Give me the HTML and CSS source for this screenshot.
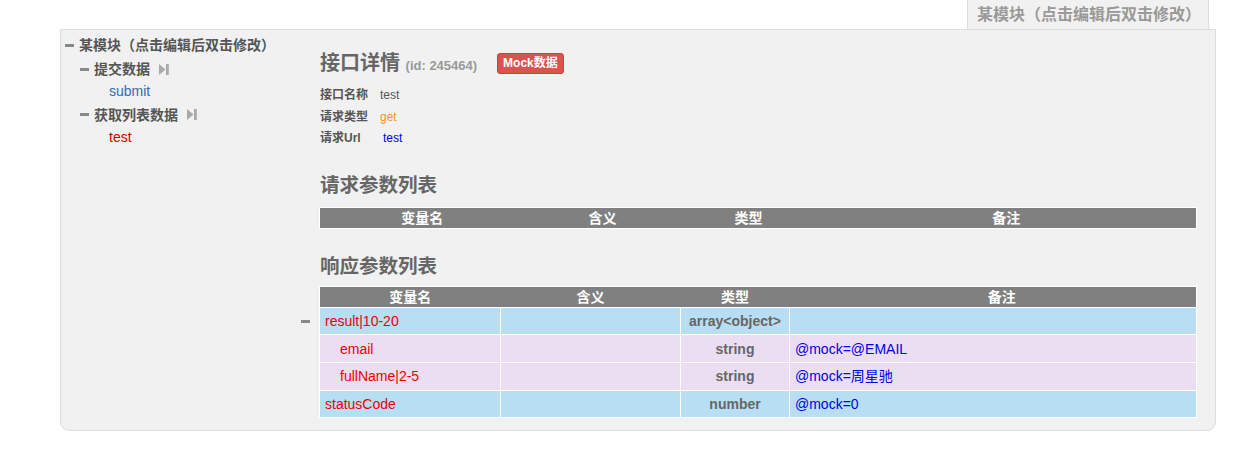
FILE: index.html
```html
<!DOCTYPE html>
<html lang="zh">
<head>
<meta charset="utf-8">
<title>接口详情</title>
<link rel="stylesheet" href="styles.css">
</head>
<body>
<div class="wrap">
  <div class="tabs">
    <div class="tab">某模块（点击编辑后双击修改）</div>
  </div>
  <div class="panel">
    <aside class="tree">
      <div class="node root"><span class="minus"></span>某模块（点击编辑后双击修改）</div>
      <div class="node page"><span class="minus"></span>提交数据<svg class="play" width="10" height="13" viewBox="0 0 10 13"><path d="M0 1 L6.5 6.5 L0 12 Z" fill="#aaa"/><rect x="7" y="1" width="2.8" height="11" fill="#aaa"/></svg></div>
      <div class="leaf act-blue">submit</div>
      <div class="node page"><span class="minus"></span>获取列表数据<svg class="play" width="10" height="13" viewBox="0 0 10 13"><path d="M0 1 L6.5 6.5 L0 12 Z" fill="#aaa"/><rect x="7" y="1" width="2.8" height="11" fill="#aaa"/></svg></div>
      <div class="leaf act-red">test</div>
    </aside>
    <main class="content">
      <div class="title-row">
        <h1 class="title">接口详情 <span class="id">(id: 245464)</span></h1>
        <span class="badge">Mock数据</span>
      </div>
      <div class="info">
        <div class="info-row"><span class="lbl">接口名称</span><span class="val">test</span></div>
        <div class="info-row"><span class="lbl">请求类型</span><span class="val orange">get</span></div>
        <div class="info-row"><span class="lbl lbl-url">请求Url</span><span class="val blue">test</span></div>
      </div>

      <h2 class="sec">请求参数列表</h2>
      <table class="ptable req">
        <colgroup><col class="c1"><col class="c2"><col class="c3"><col class="c4"></colgroup>
        <thead><tr><th>变量名</th><th>含义</th><th>类型</th><th>备注</th></tr></thead>
      </table>

      <h2 class="sec sec2">响应参数列表</h2>
      <div class="resp">
        <span class="row-toggle"></span>
        <table class="ptable res">
          <colgroup><col class="r1"><col class="r2"><col class="r3"><col class="r4"></colgroup>
          <thead><tr><th>变量名</th><th>含义</th><th>类型</th><th class="th-note">备注</th></tr></thead>
          <tbody>
            <tr class="lv1"><td class="name">result|10-20</td><td></td><td class="type">array&lt;object&gt;</td><td class="remark"></td></tr>
            <tr class="lv2"><td class="name sub">email</td><td></td><td class="type">string</td><td class="remark">@mock=@EMAIL</td></tr>
            <tr class="lv2"><td class="name sub">fullName|2-5</td><td></td><td class="type">string</td><td class="remark">@mock=周星驰</td></tr>
            <tr class="lv1"><td class="name">statusCode</td><td></td><td class="type">number</td><td class="remark">@mock=0</td></tr>
          </tbody>
        </table>
      </div>
    </main>
  </div>
</div>
</body>
</html>
```

FILE: styles.css
```css
* { box-sizing: border-box; }
html, body { margin: 0; padding: 0; background: #fff; }
body {
  font-family: "Liberation Sans", Arial, "Noto Sans CJK SC", sans-serif;
  color: #555;
}
.wrap {
  margin-left: 60px;
  width: 1156px;
}
.tabs {
  display: flex;
  justify-content: flex-end;
  padding-right: 7px;
  height: 29px;
}
.tab {
  width: 242px;
  height: 29px;
  background: #f1f1f1;
  border-left: 1px solid #ddd;
  border-right: 1px solid #ddd;
  color: #999;
  font-size: 16px;
  font-weight: bold;
  padding: 5px 0 0 9px;
  line-height: 20px;
  white-space: nowrap;
  overflow: hidden;
}
.panel {
  display: flex;
  background: #f1f1f1;
  border: 1px solid #ddd;
  border-radius: 0 0 9px 9px;
  height: 402px;
}
.tree {
  width: 259px;
  padding: 4px 0 0 4px;
  font-size: 14px;
  font-weight: bold;
  color: #555;
}
.node {
  display: flex;
  align-items: center;
  height: 22px;
  line-height: 22px;
  white-space: nowrap;
}
.minus {
  display: inline-block;
  width: 9px;
  height: 3px;
  background: #888;
  margin-right: 5px;
}
.root { margin-bottom: 2px; }
.page { padding-left: 15px; margin-top: 1.5px; }
.play { margin-left: 9px; }
.leaf {
  padding-left: 44px;
  font-size: 14px;
  font-weight: normal;
  height: 22px;
  line-height: 22px;
}
.act-blue { color: #2f6db5; }
.act-red { color: #cc0000; }

.content {
  flex: 1;
  padding: 20px 0 0 0;
}
.title-row {
  display: flex;
  align-items: center;
  height: 28px;
}
.title {
  margin: 0;
  font-size: 20px;
  font-weight: bold;
  color: #666;
  line-height: 28px;
}
.id {
  font-size: 13px;
  color: #999;
  font-weight: bold;
}
.badge {
  margin-left: 20px;
  background: #d9534f;
  border: 1px solid #c9403c;
  color: #fff;
  font-size: 12px;
  font-weight: bold;
  border-radius: 3px;
  height: 21px;
  line-height: 19px;
  padding: 0 5px;
  margin-top: -2px;
}
.info { margin-top: 7px; }
.info-row {
  height: 21.5px;
  line-height: 21.5px;
  font-size: 12px;
  display: flex;
}
.lbl {
  font-weight: bold;
  color: #555;
  width: 60px;
}
.lbl-url { width: 63px; }
.val { color: #555; }
.orange { color: #f7941d; }
.blue { color: #0000ee; }

.sec {
  margin: 22px 0 0 0;
  font-size: 19.5px;
  font-weight: bold;
  color: #666;
  line-height: 26px;
  height: 26px;
}
.sec2 { margin-top: 24px; }

.ptable {
  border-collapse: collapse;
  table-layout: fixed;
  width: 878px;
  border: 1px solid #fff;
  font-size: 14px;
}
.req { margin-top: 9px; margin-left: -1px; }
.req .c1 { width: 205px; }
.req .c2 { width: 156px; }
.req .c3 { width: 136px; }
.req .c4 { width: auto; }
.ptable th {
  background: #808080;
  color: #fff;
  font-weight: bold;
  height: 20px;
  line-height: 20px;
  padding: 0;
  text-align: center;
}
.ptable th.th-note { padding-left: 18px; }
.resp {
  position: relative;
  margin-top: 7px;
  margin-left: -1px;
}
.row-toggle {
  position: absolute;
  left: -18px;
  top: 34px;
  width: 9px;
  height: 3px;
  background: #888;
}
.res .r1 { width: 181px; }
.res .r2 { width: 180px; }
.res .r3 { width: 109px; }
.res .r4 { width: auto; }
.res td {
  border: 1px solid #fff;
  height: 27.7px;
  padding: 0 5px;
  line-height: 26px;
}
.res tr.lv1 td { background: #b8def4; }
.res tr.lv2 td { background: #ecdef2; }
.name { color: #ee0000; }
.name.sub { padding-left: 20px; }
.type {
  text-align: center;
  font-weight: bold;
  color: #666;
}
.remark { color: #0000ee; }
```
